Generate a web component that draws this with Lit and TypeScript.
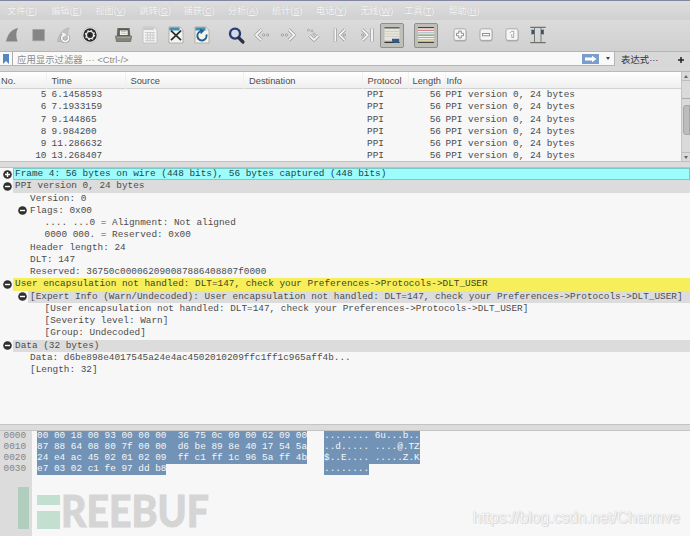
import { LitElement, html, svg, css, nothing } from "lit";
import { customElement, property } from "lit/decorators.js";
import { classMap } from "lit/directives/class-map.js";

const MENUS: [string, string][] = [
  ["文件", "F"], ["编辑", "E"], ["视图", "V"], ["跳转", "G"], ["捕获", "C"], ["分析", "A"],
  ["统计", "S"], ["电话", "Y"], ["无线", "W"], ["工具", "T"], ["帮助", "H"],
];

// Every glyph is drawn on a 26x26 canvas centred on (13, 13).
const dots = (a: number, b: number) => svg`<g fill="#f4f4f4" stroke="#8c8c8c" stroke-width=".8"><circle cx=${a} cy="13" r="1.1"/><circle cx=${b} cy="13" r="1.1"/></g>`;
const stroke = (d: string) => svg`<path d=${d} fill="none" stroke="#8a8a8a" stroke-width="3.1" stroke-linejoin="round"/><path d=${d} fill="none" stroke="#f6f6f6" stroke-width="1.9"/>`;
const key = svg`<rect x="7" y="7.4" width="12.4" height="12.2" rx="2" fill="#aaa"/><rect x="7" y="6.8" width="12" height="11.6" rx="2" fill="#f5f5f3" stroke="#9c9c9c" stroke-width=".8"/>`;
const page = svg`<path d="M6 5H17L20 8V21H6Z" fill="#f4f4ec" stroke="#a5a59c" stroke-width=".8"/><path d="M6.4 5.4H16.5V8.5H6.4Z" fill="#3d8fb4"/><path d="M17 5V8H20Z" fill="#fff" stroke="#a5a59c" stroke-width=".5"/>`;
const ICONS: Record<string, unknown> = {
  start: svg`<path d="M6 19.5C8 12 11 7.5 18 6C15.8 10 15.8 15 17.6 19.5Z" fill="#858585"/>`,
  stop: svg`<rect x="6.8" y="7.4" width="11.6" height="11.4" fill="#858585" stroke="#a2a2a2" stroke-width=".7"/>`,
  restart: svg`<path d="M6.5 19.5C8 12 11 7.5 18 6C16 10 16 15 18 19.5Z" fill="#c2c2c2" stroke="#aaa" stroke-width=".6"/><path d="M16.7 13.6A3.5 3.5 0 1 1 12.4 13" fill="none" stroke="#929292" stroke-width="3"/><path d="M16.7 13.6A3.5 3.5 0 1 1 12.4 13" fill="none" stroke="#f7f7f7" stroke-width="1.8"/><path d="M11 10.5L15.5 12.5L12 15Z" fill="#f7f7f7"/>`,
  options: svg`<circle cx="13" cy="13" r="8" fill="#ececec" stroke="#b0b0b0" stroke-width=".6"/><circle cx="13" cy="13" r="6.7" fill="#292929"/><circle cx="13" cy="13" r="3.6" fill="none" stroke="#eee" stroke-width="1.4"/><circle cx="13" cy="13" r="4.6" fill="none" stroke="#eee" stroke-width="1.1" stroke-dasharray="1.7 1.91"/><circle cx="13" cy="13" r="1.7" fill="#222"/>`,
  open: svg`<path d="M6.4 6H18.6L19.4 15H5.8Z" fill="#656760"/><rect x="8.3" y="8" width="8.8" height="5.5" fill="#f3f3ed" stroke="#44463f" stroke-width=".7"/><path d="M10 9.5H15.5M10 11.3H15.5" stroke="#aaa" stroke-width=".7"/><path d="M4.5 14H20.6L19.7 19.5H5.4Z" fill="#85877b" stroke="#55574f" stroke-width=".6"/><path d="M5.6 15.2H19.5" stroke="#b7b9ac" stroke-width=".8"/>`,
  save: svg`<path d="M6 5H17L20 8V21H6Z" fill="#f2f2f2" stroke="#bcbcbc" stroke-width=".8"/><path d="M6.4 5.4H17V8H6.4Z" fill="#c9c9c9"/><path d="M8 10.5H18M8 13.2H18M8 16H18M8 18.7H18M10.6 10V19.5M13.3 10V19.5M16 10V19.5" stroke="#c5c5c5" stroke-width=".8"/>`,
  close: svg`${page}<path d="M8 8.6L18 18.2M18 8.6L8 18.2" stroke="#25303a" stroke-width="1.8"/>`,
  reload: svg`${page}<path d="M17.4 12.6A4.6 4.6 0 1 1 11.6 9.4" fill="none" stroke="#255f91" stroke-width="2"/><path d="M10.6 6.8L15.6 8.6L11.8 12.2Z" fill="#255f91"/>`,
  find: svg`<circle cx="12" cy="11.6" r="5" fill="#d3dbe6" stroke="#2b3c75" stroke-width="2.4"/><path d="M15.8 15.8L20 20" stroke="#2d3140" stroke-width="3.2" stroke-linecap="round"/>`,
  back: svg`${stroke("M12.5 7.6L7 13L12.5 18.4")}${dots(14.6, 18.6)}`,
  forward: svg`${stroke("M13.8 7.6L19.2 13L13.8 18.4")}${dots(7.4, 11.4)}`,
  go: svg`${stroke("M8.5 13.6L13 18L17.5 13.6")}<g fill="#eee" stroke="#999" stroke-width=".8"><circle cx="7.5" cy="8.2" r="1"/><circle cx="11" cy="8.8" r="1"/><circle cx="13.2" cy="12.2" r="1.1"/></g>`,
  first: svg`${stroke("M8.3 6.5V19.5")}${stroke("M18 7.6L12.5 13L18 18.4")}<circle cx="17.5" cy="13" r="1" fill="#eee" stroke="#8c8c8c" stroke-width=".8"/>`,
  last: svg`${stroke("M19 6.5V19.5")}${stroke("M9.3 7.6L14.8 13L9.3 18.4")}<circle cx="9.6" cy="13" r="1" fill="#eee" stroke="#8c8c8c" stroke-width=".8"/>`,
  autoscroll: svg`<path d="M5.5 5.8H20.5" stroke="#454545" stroke-width="1.1"/><rect x="5.5" y="7" width="15" height="11.5" fill="#e6e6dd"/><path d="M5.5 9.5H20.5M5.5 12H20.5M5.5 14.5H20.5" stroke="#c6c6bb" stroke-width=".7"/><path d="M5.5 20.4H20.5" stroke="#333" stroke-width="1.1"/><path d="M13 16.8H20.2V19L18.3 21H15L13 19Z" fill="#30588b"/>`,
  colorize: svg`<path d="M5 5.5H21" stroke="#444" stroke-width="1.1"/><path d="M5 6.8H21V19.6H5Z" fill="#f1eeee"/><path d="M5 8.3H21" stroke="#dc8488" stroke-width="1.2"/><path d="M5 10.8H21" stroke="#9dabc8" stroke-width=".9"/><path d="M5 13.1H21" stroke="#67a565" stroke-width="1.2"/><path d="M5 15.5H21" stroke="#b79cbc" stroke-width=".9"/><path d="M5 17.8H21" stroke="#d0ba5c" stroke-width="1.2"/><path d="M5 20.4H21" stroke="#444" stroke-width="1.1"/>`,
  zoomin: svg`${key}<path d="M11.8 9H14.2V11.3H16.5V13.7H14.2V16H11.8V13.7H9.5V11.3H11.8Z" fill="#fff" stroke="#777" stroke-width=".8"/>`,
  zoomout: svg`${key}<rect x="9.6" y="11.4" width="6.8" height="2.4" fill="#fff" stroke="#777" stroke-width=".8"/>`,
  zoomreset: svg`${key}<path d="M10.7 11L12.8 9.4H14.7V15.5H12.8V12" fill="#fff" stroke="#888" stroke-width=".7"/>`,
  resize: svg`<path d="M5.3 5.3H20.7M5.3 20.7H20.7" stroke="#555a50" stroke-width="1"/><path d="M9.5 5.5V20.5M16 5.5V20.5" stroke="#777c72" stroke-width="1"/><path d="M6.4 7.5L9.2 8V12L6.4 12.5ZM18.8 7.5L16 8V12L18.8 12.5Z" fill="#38536b"/>`,
};
const GROUPS: [string, string[]][] = [
  ["g1", ["start", "stop", "restart", "options"]],
  ["g2", ["open", "save", "close", "reload"]],
  ["g3", ["find", "back", "forward", "go", "first", "last"]],
  ["g4", ["autoscroll"]],
  ["g5", ["colorize"]],
  ["g6", ["zoomin", "zoomout", "zoomreset", "resize"]],
];

const PACKETS: [string, string][] = [
  ["5", "6.1458593"], ["6", "7.1933159"], ["7", "9.144865"], ["8", "9.984200"], ["9", "11.286632"], ["10", "13.268407"],
];

interface Node { depth: number; text: string; mark?: "plus" | "minus"; tone?: string }
const TREE: Node[] = [
  { depth: 0, mark: "plus", tone: "selected", text: "Frame 4: 56 bytes on wire (448 bits), 56 bytes captured (448 bits)" },
  { depth: 0, mark: "minus", tone: "section", text: "PPI version 0, 24 bytes" },
  { depth: 1, text: "Version: 0" },
  { depth: 1, mark: "minus", text: "Flags: 0x00" },
  { depth: 2, text: ".... ...0 = Alignment: Not aligned" },
  { depth: 2, text: "0000 000. = Reserved: 0x00" },
  { depth: 1, text: "Header length: 24" },
  { depth: 1, text: "DLT: 147" },
  { depth: 1, text: "Reserved: 36750c000062090087886408807f0000" },
  { depth: 0, mark: "minus", tone: "warn", text: "User encapsulation not handled: DLT=147, check your Preferences->Protocols->DLT_USER" },
  { depth: 1, mark: "minus", tone: "section", text: "[Expert Info (Warn/Undecoded): User encapsulation not handled: DLT=147, check your Preferences->Protocols->DLT_USER]" },
  { depth: 2, text: "[User encapsulation not handled: DLT=147, check your Preferences->Protocols->DLT_USER]" },
  { depth: 2, text: "[Severity level: Warn]" },
  { depth: 2, text: "[Group: Undecoded]" },
  { depth: 0, mark: "minus", tone: "section", text: "Data (32 bytes)" },
  { depth: 1, text: "Data: d6be898e4017545a24e4ac4502010209ffc1ff1c965aff4b..." },
  { depth: 1, text: "[Length: 32]" },
];

const DUMP: [string, string, string][] = [
  ["0000", "00 00 18 00 93 00 00 00  36 75 0c 00 00 62 09 00", "........ 6u...b.."],
  ["0010", "87 88 64 08 80 7f 00 00  d6 be 89 8e 40 17 54 5a", "..d..... ....@.TZ"],
  ["0020", "24 e4 ac 45 02 01 02 09  ff c1 ff 1c 96 5a ff 4b", "$..E.... .....Z.K"],
  ["0030", "e7 03 02 c1 fe 97 dd b8", "........"],
];

@customElement("tool-icon")
class ToolIcon extends LitElement {
  @property() name = "";
  static styles = css`
    :host { display: block; height: 26px; }
    svg { display: block; width: 26px; height: 26px; }
  `;
  render() {
    return html`<svg viewBox="0 0 26 26">${ICONS[this.name]}</svg>`;
  }
}

@customElement("packet-list")
class PacketList extends LitElement {
  static styles = css`
    :host { display: flex; height: 91px; box-sizing: border-box; background: #f7f7f7; color: #4c4c4c; border-top: 1px solid #bababa; border-bottom: 1px solid #c0c0c0; }
    .table { flex: 1; overflow: hidden; }
    .row { display: grid; grid-template-columns: 46.5px 79px 118.5px 118.5px 46px 37px 1fr; height: 12.27px; font: 9.39px/12.27px "Liberation Mono", monospace; white-space: pre; }
    .head { height: 17px; font: 9.3px/18px "Liberation Sans", sans-serif; background: linear-gradient(#fff, #efefef); border-bottom: 1px solid #d2d2d2; box-sizing: border-box; }
    .head span { border-right: 1px solid #f0f0f0; padding-left: 5px; box-sizing: border-box; }
    .head span:first-child { padding-left: 1px; }
    .head .len { padding-left: 4px; }
    .head .info { padding-left: 1px; border: 0; }
    .body .no { text-align: right; }
    .body .time { padding-left: 5px; }
    .body .proto { padding-left: 4.5px; }
    .body .len { text-align: right; padding-right: 4.5px; }
    .bar { width: 8px; border-left: 1px solid #c4c4c4; background: #dadada; display: flex; flex-direction: column; align-items: center; }
    .arrow { height: 8px; width: 100%; display: grid; place-items: center; }
    .arrow svg { width: 4px; height: 3px; fill: #666; }
    .track { flex: 1; width: 100%; border: solid #bdbdbd; border-width: 1px 0; box-sizing: border-box; }
    .page { height: 17px; border-bottom: 1px solid #aaa; margin-bottom: 6px; }
    .thumb { height: 30px; margin-left: 1px; background: #bcbcbc; border: 1px solid #a6a6a6; border-radius: 3px 0 0 3px; box-sizing: border-box; }
  `;
  render() {
    return html`
      <div class="table">
        <div class="row head"><span>No.</span><span>Time</span><span>Source</span><span>Destination</span><span>Protocol</span><span class="len">Length</span><span class="info">Info</span></div>
        <div class="body">
          ${PACKETS.map(([no, time]) => html`<div class="row"><span class="no">${no}</span><span class="time">${time}</span><span></span><span></span><span class="proto">PPI</span><span class="len">56</span><span>PPI version 0, 24 bytes</span></div>`)}
        </div>
      </div>
      <div class="bar">
        <div class="arrow"><svg viewBox="0 0 4 3"><path d="M0 3L2 0L4 3Z" /></svg></div>
        <div class="track"><div class="page"></div><div class="thumb"></div></div>
        <div class="arrow"><svg viewBox="0 0 4 3"><path d="M0 0L2 3L4 0Z" /></svg></div>
      </div>
    `;
  }
}

@customElement("detail-tree")
class DetailTree extends LitElement {
  static styles = css`
    :host { display: block; height: 258px; box-sizing: border-box; border-top: 1px solid #c0c0c0; border-bottom: 1px solid #c4c4c4; background: #f7f7f7; color: #4c4c4c; font: 9.39px/12.28px "Liberation Mono", monospace; }
    .row { display: grid; grid-template-columns: 13px 1fr; height: 12.28px; white-space: pre; }
    .d1 { grid-template-columns: 28px 1fr; }
    .d2 { grid-template-columns: 42.5px 1fr; }
    .mark { display: flex; align-items: center; justify-content: flex-end; padding-right: 1px; }
    .mark svg { width: 9px; height: 9px; }
    .label { padding-left: 2px; }
    .section .label { background: #dcdcdc; }
    .selected .label { background: #9dfdfd; color: #17474a; box-shadow: inset 0 0 0 1px #7cc9ca; }
    .warn .label { background: #f6ef5b; color: #44431f; }
  `;
  render() {
    return html`${TREE.map((n) => html`
      <div class=${classMap({ row: true, ["d" + n.depth]: true, [n.tone ?? "plain"]: true })}><span class="mark">${n.mark
        ? html`<svg viewBox="0 0 9 9"><circle cx="4.5" cy="4.5" r="4.3" fill="#303030" /><path d=${n.mark === "plus" ? "M2 4.5H7M4.5 2V7" : "M2 4.5H7"} stroke="#fff" stroke-width="1.4" /></svg>`
        : nothing}</span><span class="label">${n.text}</span></div>`)}`;
  }
}

@customElement("byte-view")
class ByteView extends LitElement {
  static styles = css`
    :host { display: block; position: relative; flex: 1; min-height: 0; box-sizing: border-box; padding-top: .4px; border-top: 1px solid #c4c4c4; background: linear-gradient(90deg, #dcdcdc 32px, #f7f7f7 32px); font: 9.39px/10.9px "Liberation Mono", monospace; }
    .line { display: grid; grid-template-columns: 37px 287px 1fr; height: 10.9px; white-space: pre; }
    .off { padding-left: 3.5px; color: #858585; }
    .hl { justify-self: start; height: 10.95px; background: #7293b5; color: #f4f7fa; }
    .logo { position: absolute; left: 17px; top: 54px; width: 196px; height: 51px; overflow: visible; }
    .logo text { font: 900 43px Lato, sans-serif; fill: #d5d5d5; stroke: #d5d5d5; stroke-width: .8px; }
    .url { position: absolute; right: 10px; bottom: 9px; font: 15.6px/19px "Liberation Sans", sans-serif; color: #f7f7f7; text-shadow: 0 0 1px #bbb, 1px 1px 0 #e0e0e0; white-space: nowrap; }
  `;
  render() {
    return html`
      ${DUMP.map(([off, hex, asc]) => html`<div class="line"><span class="off">${off}</span><span class="hl">${hex}</span><span class="hl">${asc}</span></div>`)}
      <svg class="logo" viewBox="0 0 196 51">
        <rect x="1" y="2" width="11" height="42" fill="#b0cdbe" />
        <rect x="20" y="10" width="23" height="10" fill="#c2dfd0" />
        <rect x="20" y="26" width="23" height="18" fill="#c2dfd0" />
        <text x="44" y="41.8" textLength="148" lengthAdjust="spacingAndGlyphs">REEBUF</text>
      </svg>
      <div class="url">https://blog.csdn.net/Charmve</div>
    `;
  }
}

@customElement("app-root")
class AppRoot extends LitElement {
  static styles = css`
    :host { display: flex; flex-direction: column; width: 690px; height: 536px; overflow: hidden; background: #d8d8d8; border-top: 1px solid #8386a0; box-sizing: border-box; font-family: "Liberation Sans", "Noto Sans CJK SC", sans-serif; }
    .menu { display: flex; height: 19px; padding-left: 7px; background: linear-gradient(#dedede, #d0d0d0); font-size: 9.2px; line-height: 20px; color: #f4f4f4; text-shadow: 0 0 1px #c0c0c0; }
    .menu span { width: 44.15px; white-space: nowrap; }
    .tools { display: flex; align-items: center; height: 32px; padding-bottom: 1px; background: linear-gradient(#dbdbdb, #d0d0d0); border-bottom: 1px solid #b5b5b5; box-sizing: border-box; }
    .group { display: grid; grid-auto-flow: column; grid-auto-columns: 25.7px; height: 26px; }
    .g2 { margin-left: 8.7px; }
    .g3 { margin-left: 8.6px; grid-auto-columns: 26px; }
    .g4, .g5 { width: 24px; height: 25px; border: 1px solid #8e8e8e; border-radius: 2px; background: #bfbfba; grid-auto-columns: 22px; overflow: hidden; box-sizing: border-box; }
    .g4 tool-icon, .g5 tool-icon { margin: -1.5px -2px; }
    .g4 { margin-left: 1.6px; }
    .g5 { margin-left: 10px; }
    .g6 { margin-left: 9px; grid-auto-columns: 26px; }
    .filter { display: flex; height: 14px; margin-bottom: 5px; font-size: 9.4px; line-height: 15px; color: #333; }
    .field { display: flex; width: 615px; height: 14px; background: #f9f9f9; border: solid #b5b5b5; border-width: 0 1px 1px 0; box-sizing: border-box; }
    .bookmark { width: 12px; border-right: 1px solid #aaa; display: flex; justify-content: center; align-items: center; }
    .bookmark svg { width: 6px; height: 10px; }
    .hint { flex: 1; padding-left: 4px; color: #8c8c8c; white-space: pre; }
    .apply { width: 17px; height: 10px; margin: 1.5px 7px 0 0; background: #7b9dce; }
    .apply svg, .drop svg { display: block; }
    .drop { width: 8px; padding-top: 5px; }
    .expr { padding-left: 6px; width: 61.5px; white-space: nowrap; box-sizing: border-box; }
    .add { width: 8px; height: 8px; margin-top: 4px; }
    .gap { height: 5px; background: #dcdcdc; }
    .menu, .tools, .filter, .gap, packet-list, detail-tree { flex: none; }
  `;
  render() {
    return html`
      <div class="menu">${MENUS.map(([label, k]) => html`<span>${label}(<u>${k}</u>)</span>`)}</div>
      <div class="tools">${GROUPS.map(([cls, names]) => html`<div class="group ${cls}">${names.map((n) => html`<tool-icon name=${n}></tool-icon>`)}</div>`)}</div>
      <div class="filter">
        <div class="field">
          <div class="bookmark"><svg viewBox="0 0 6 10"><path d="M0 0H6V10L3 7L0 10Z" fill="#5685c2" /></svg></div>
          <div class="hint">应用显示过滤器 ··· &lt;Ctrl-/&gt;</div>
          <div class="apply"><svg width="17" height="10" viewBox="0 0 17 10"><path d="M3 3.5H10V1.8L14.5 5L10 8.2V6.5H3Z" fill="#fff" /></svg></div>
          <div class="drop"><svg width="4" height="3" viewBox="0 0 4 3"><path d="M0 0H4L2 3Z" fill="#444" /></svg></div>
        </div>
        <div class="expr">表达式···</div>
        <svg class="add" viewBox="0 0 8 8"><path d="M1 4H7M4 1V7" stroke="#222" stroke-width="1.5" /></svg>
      </div>
      <packet-list></packet-list>
      <div class="gap"></div>
      <detail-tree></detail-tree>
      <div class="gap"></div>
      <byte-view></byte-view>
    `;
  }
}
